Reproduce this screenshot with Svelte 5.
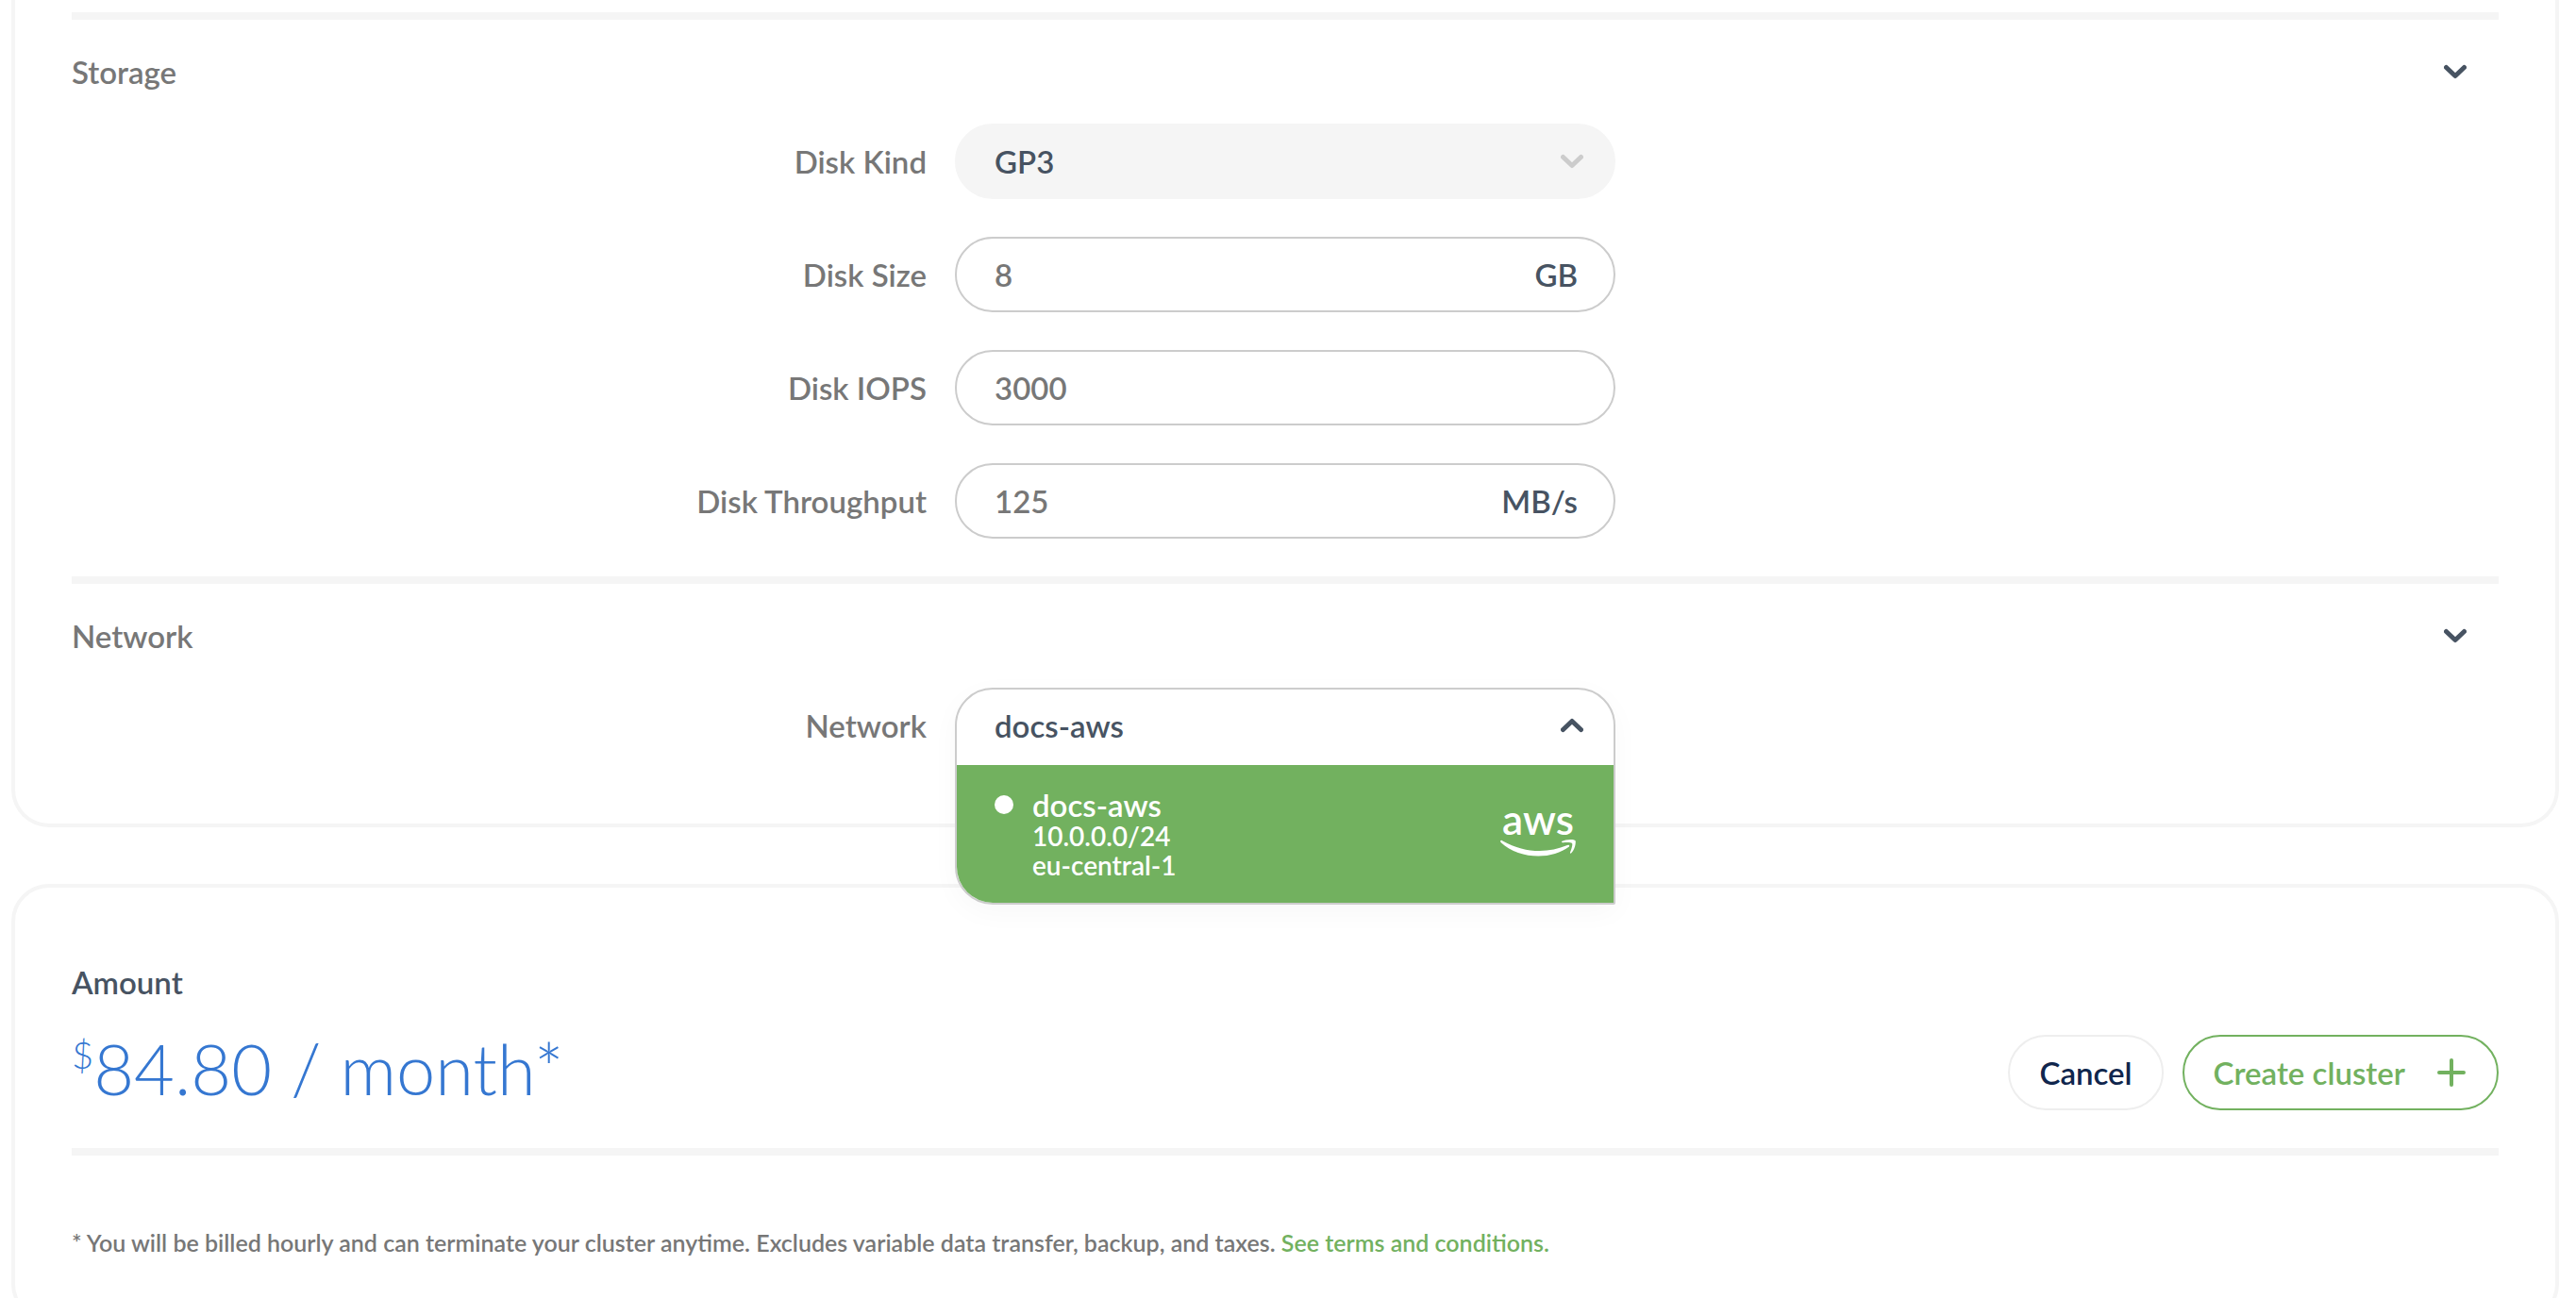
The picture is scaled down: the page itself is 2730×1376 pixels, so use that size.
<script>
  let size = $state('8');
  let iops = $state('3000');
  let throughput = $state('125');
  let open = $state(true);
  let storageOpen = $state(true);
  let networkOpen = $state(true);
</script>

{#snippet chevron(up = false)}
  <svg class="chevron" class:up viewBox="0 0 24 16" aria-hidden="true">
    <path d="M2.5 3.5 12 12.5 21.5 3.5" />
  </svg>
{/snippet}

<main>
  <section class="card options">
    <div class="group">
      <button class="toggle" aria-expanded={storageOpen} onclick={() => (storageOpen = !storageOpen)}>
        <span>Storage</span>
        {@render chevron()}
      </button>
      {#if storageOpen}
        <div class="fields">
          <div class="field">
            <label for="disk-kind">Disk Kind</label>
            <div class="pill disabled">
              <select id="disk-kind" disabled>
                <option>GP3</option>
              </select>
              {@render chevron()}
            </div>
          </div>
          <div class="field">
            <label for="disk-size">Disk Size</label>
            <div class="pill">
              <input id="disk-size" type="text" inputmode="numeric" bind:value={size} />
              <span class="unit">GB</span>
            </div>
          </div>
          <div class="field">
            <label for="disk-iops">Disk IOPS</label>
            <div class="pill">
              <input id="disk-iops" type="text" inputmode="numeric" bind:value={iops} />
            </div>
          </div>
          <div class="field">
            <label for="disk-throughput">Disk Throughput</label>
            <div class="pill">
              <input id="disk-throughput" type="text" inputmode="numeric" bind:value={throughput} />
              <span class="unit">MB/s</span>
            </div>
          </div>
        </div>
      {/if}
    </div>

    <div class="group">
      <button class="toggle" aria-expanded={networkOpen} onclick={() => (networkOpen = !networkOpen)}>
        <span>Network</span>
        {@render chevron()}
      </button>
      {#if networkOpen}
        <div class="fields">
          <div class="field">
            <label for="network">Network</label>
            <div class="picker">
              <div class="menu" class:open>
                <button
                  id="network"
                  class="current"
                  aria-haspopup="listbox"
                  aria-expanded={open}
                  onclick={() => (open = !open)}
                >
                  <span>docs-aws</span>
                  {@render chevron(open)}
                </button>
                {#if open}
                  <div role="listbox" aria-label="Network">
                    <button class="option" role="option" aria-selected="true" onclick={() => (open = false)}>
                      <span class="dot"></span>
                      <span class="details">
                        <span class="name">docs-aws</span>
                        <span>10.0.0.0/24</span>
                        <span>eu-central-1</span>
                      </span>
                      <svg class="aws" viewBox="0 0 80 48" role="img" aria-label="aws">
                        <text x="40" y="25" text-anchor="middle">aws</text>
                        <path
                          d="M0 31.5Q1 30.3 2.5 31.4C26 44.5 50 44.8 71 36Q74 35 73 37.5C54 52 20 51 .5 33Z"
                        />
                        <path
                          d="M65 32C69 29.5 78 29.3 79.5 31C80.5 33 79 41 75 44.5Q73.5 45 74 43.5C75.5 40 77 35 76 34C75 32.8 70 33 66.5 33.3Q64.5 33.3 65 32Z"
                        />
                      </svg>
                    </button>
                  </div>
                {/if}
              </div>
            </div>
          </div>
        </div>
      {/if}
    </div>
  </section>

  <section class="card summary">
    <div class="checkout">
      <div>
        <h2>Amount</h2>
        <p class="price"><span class="currency">$</span>84.80 / month*</p>
      </div>
      <div class="actions">
        <button class="action cancel">Cancel</button>
        <button class="action create">
          Create cluster
          <svg class="plus" viewBox="0 0 30 30" aria-hidden="true"><path d="M15 2V28M2 15H28" /></svg>
        </button>
      </div>
    </div>
    <p class="note">
      * You will be billed hourly and can terminate your cluster anytime. Excludes variable data
      transfer, backup, and taxes. <a href="#terms">See terms and conditions.</a>
    </p>
  </section>
</main>

<style>
  :global(body) {
    margin: 0;
    background: #fff;
  }

  main {
    --line: #f5f5f5;
    --border: #ccc;
    --grey: #777;
    --slate: #475362;
    --green: #72b15f;
    display: flex;
    flex-direction: column;
    gap: 60px;
    padding: 0 18px 32px 12px;
    color: var(--grey);
    font: 600 33px/40px Lato, 'Open Sans', sans-serif;
  }

  h2,
  p {
    margin: 0;
    font: inherit;
  }

  button,
  input,
  select {
    box-sizing: border-box;
    margin: 0;
    padding: 0;
    border: 0;
    background: none;
    color: inherit;
    font: inherit;
  }

  button {
    cursor: pointer;
    text-align: left;
  }

  .card {
    border: 4px solid var(--line);
    border-radius: 40px;
    padding: 60px;
  }

  .options {
    border-top: 0;
    border-top-left-radius: 0;
    border-top-right-radius: 0;
    padding-top: 13px;
    padding-bottom: 24px;
  }

  .group {
    border-top: 8px solid var(--line);
  }

  .toggle {
    display: flex;
    align-items: center;
    justify-content: space-between;
    width: 100%;
    height: 110px;
    padding-right: 34px;
  }

  .chevron {
    flex: none;
    width: 24px;
    height: 16px;
    fill: none;
    stroke: var(--slate);
    stroke-width: 5;
    stroke-linecap: round;
    stroke-linejoin: round;
  }

  .chevron.up {
    transform: rotate(180deg);
  }

  .fields {
    display: grid;
    gap: 40px;
    padding-bottom: 40px;
  }

  .field {
    display: grid;
    grid-template-columns: minmax(0, 1fr) minmax(0, 700px) minmax(0, 1fr);
    column-gap: 30px;
    align-items: center;
  }

  .field label {
    text-align: right;
  }

  .pill {
    display: flex;
    align-items: center;
    box-sizing: border-box;
    height: 80px;
    padding: 0 38px 0 40px;
    border: 2px solid var(--border);
    border-radius: 40px;
  }

  .pill input,
  .pill select {
    flex: 1;
    min-width: 0;
    height: 100%;
    outline: 0;
  }

  .pill select {
    appearance: none;
    color: var(--slate);
    opacity: 1;
  }

  .pill.disabled {
    padding-right: 32px;
    border-color: var(--line);
    background: var(--line);
  }

  .disabled .chevron {
    stroke: #ccc;
  }

  .unit {
    color: var(--slate);
  }

  .picker {
    position: relative;
    height: 80px;
  }

  .menu {
    position: absolute;
    inset: 0 0 auto;
    z-index: 1;
    overflow: hidden;
    border: 2px solid var(--border);
    border-radius: 40px;
    background: #fff;
  }

  .menu.open {
    border-bottom-right-radius: 2px;
    box-shadow: 0 8px 30px rgb(0 0 0 / 3%);
  }

  .current {
    display: flex;
    align-items: center;
    justify-content: space-between;
    width: 100%;
    height: 80px;
    padding: 0 32px 4px 40px;
    color: var(--slate);
  }

  .option {
    display: flex;
    align-items: center;
    width: 100%;
    padding: 24px 40px;
    background: var(--green);
    color: #fff;
    font-size: 28px;
    line-height: 31px;
  }

  .dot {
    align-self: flex-start;
    width: 20px;
    height: 20px;
    margin: 8px 20px 0 0;
    border-radius: 50%;
    background: #fff;
  }

  .details {
    display: grid;
    flex: 1;
  }

  .name {
    font-size: 33px;
    line-height: 36px;
  }

  .aws {
    width: 80px;
    height: 48px;
    fill: #fff;
    overflow: visible;
  }

  .aws text {
    font: 600 44px Lato, sans-serif;
  }

  .summary {
    padding-top: 80px;
    padding-bottom: 60px;
  }

  .checkout {
    display: flex;
    align-items: flex-end;
    justify-content: space-between;
    padding-bottom: 40px;
    border-bottom: 8px solid var(--line);
  }

  h2 {
    color: var(--slate);
  }

  .price {
    display: flex;
    align-items: flex-start;
    margin-top: 30px;
    color: #3577d1;
    font-size: 74px;
    font-weight: 300;
    line-height: 84px;
    padding-bottom: 2px;
  }

  .currency {
    font-size: 40px;
    line-height: 54px;
  }

  .actions {
    display: flex;
    gap: 20px;
  }

  .action {
    display: flex;
    align-items: center;
    height: 80px;
    padding: 0 31px;
    border: 2px solid #eee;
    border-radius: 40px;
  }

  .cancel {
    color: #10264d;
  }

  .create {
    gap: 34px;
    padding-right: 33px;
    border-color: var(--green);
    color: var(--green);
  }

  .plus {
    width: 30px;
    height: 30px;
    fill: none;
    stroke: var(--green);
    stroke-width: 4;
    stroke-linecap: round;
  }

  .note {
    padding-top: 72px;
    font-size: 25px;
  }

  a {
    color: var(--green);
    text-decoration: none;
  }
</style>
